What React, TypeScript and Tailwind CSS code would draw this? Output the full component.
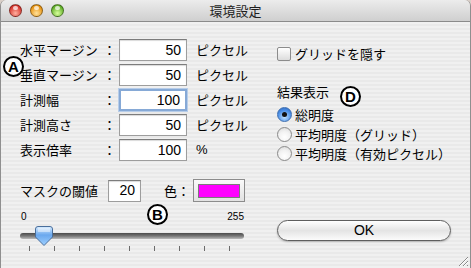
import React from "react";

const jp = "font-['Noto_Sans_CJK_JP','Noto_Sans_CJK_SC',sans-serif]";
const num = "font-['Liberation_Sans','Noto_Sans_CJK_JP',sans-serif]";

type rowData = { label: string; colonGap: boolean; value: string; unit: string; focused?: boolean };

const rows: rowData[] = [
  { label: "水平マージン", colonGap: false, value: "50", unit: "ピクセル" },
  { label: "垂直マージン", colonGap: false, value: "50", unit: "ピクセル" },
  { label: "計測幅", colonGap: true, value: "100", unit: "ピクセル", focused: true },
  { label: "計測高さ", colonGap: true, value: "50", unit: "ピクセル" },
  { label: "表示倍率", colonGap: true, value: "100", unit: "%" },
];

function Light({ color, hi }: { color: string; hi: string }) {
  return (
    <div
      className="relative h-[13px] w-[13px] rounded-full border border-black/40"
      style={{ background: `radial-gradient(circle at 50% 75%, ${hi} 0%, ${color} 70%)` }}
    >
      <div className="absolute left-[3px] top-[1px] h-[4px] w-[5px] rounded-full bg-white/70" />
    </div>
  );
}

function Marker({ letter, className }: { letter: string; className: string }) {
  return (
    <div
      className={`absolute flex h-[21px] w-[21px] items-center justify-center rounded-full border-2 border-black bg-white text-[15px] font-bold leading-none text-black ${num} ${className}`}
    >
      {letter}
    </div>
  );
}

function NumberBox({ value, focused, width }: { value: string; focused?: boolean; width: string }) {
  return (
    <div
      className={`flex h-[22px] ${width} items-center justify-end bg-white pr-[5px] text-[14px] text-black ${num} ${
        focused
          ? "border-2 border-[#86a9d6] shadow-[0_0_0_1px_#b7cde9]"
          : "border border-[#9d9d9d] border-t-[#7c7c7c] shadow-[inset_0_1px_1px_rgba(0,0,0,0.15)]"
      }`}
    >
      {value}
    </div>
  );
}

function Radio({ checked, label }: { checked?: boolean; label: string }) {
  return (
    <div className="flex h-[19.5px] items-center gap-[3px]">
      {checked ? (
        <div className="flex h-[15px] w-[15px] items-center justify-center rounded-full border border-[#3d6eb0] bg-[radial-gradient(circle_at_50%_70%,#bfe1ff_0%,#4a8ee6_60%,#2a62b8_100%)]">
          <div className="h-[5px] w-[5px] rounded-full bg-[#111]" />
        </div>
      ) : (
        <div className="h-[15px] w-[15px] rounded-full border border-[#8a8a8a] bg-[radial-gradient(circle_at_50%_70%,#ffffff_0%,#f2f2f2_50%,#d6d6d6_100%)]" />
      )}
      <span className={`text-[13px] text-black ${jp}`}>{label}</span>
    </div>
  );
}

function SliderThumb() {
  return (
    <svg width="18" height="20" viewBox="0 0 18 20" className="absolute left-[15px] top-[-7px]">
      <defs>
        <linearGradient id="thumbFill" x1="0" y1="0" x2="0" y2="1">
          <stop offset="0" stopColor="#dbeeff" />
          <stop offset="0.45" stopColor="#6aa8ee" />
          <stop offset="1" stopColor="#9fd0ff" />
        </linearGradient>
      </defs>
      <path
        d="M3 0.5 H15 Q17.5 0.5 17.5 3 V11 L9 19.5 L0.5 11 V3 Q0.5 0.5 3 0.5 Z"
        fill="url(#thumbFill)"
        stroke="#4a6f9c"
      />
      <path d="M3 2 H15 V6 H3 Z" fill="#ffffff" opacity="0.45" />
    </svg>
  );
}

function ResizeGrip() {
  return (
    <svg width="13" height="13" viewBox="0 0 13 13" className="absolute bottom-[1px] right-[1px]">
      <path d="M12 3 L3 12 M12 7 L7 12 M12 11 L11 12" stroke="#8a8a8a" strokeWidth="1" />
      <path d="M12 4 L4 12 M12 8 L8 12" stroke="#ffffff" strokeWidth="1" />
    </svg>
  );
}

export default function App() {
  const ticks = Array.from({ length: 9 });
  return (
    <div className="h-[268px] w-[471px] overflow-hidden bg-[#d9cfc8]">
      <div className="relative flex h-full w-full flex-col overflow-hidden rounded-t-[6px] border-x border-[#8f8f8f]">
        {/* title bar */}
        <div className="relative flex h-[22px] shrink-0 items-center border-b border-[#8a8a8a] bg-gradient-to-b from-[#ececec] to-[#cfcfcf]">
          <div className="ml-[8px] flex gap-[8px]">
            <Light color="#d8362e" hi="#ffb0a0" />
            <Light color="#e89412" hi="#ffe19a" />
            <Light color="#62b02a" hi="#d8ff9c" />
          </div>
          <div className={`absolute inset-x-0 text-center text-[13px] text-[#1e1e1e] ${jp}`}>環境設定</div>
        </div>

        {/* content */}
        <div className="relative flex flex-1 bg-[repeating-linear-gradient(180deg,#f0f0f0_0px,#f0f0f0_2px,#e9e9e9_2px,#e9e9e9_4px)]">
          {/* left column */}
          <div className="flex w-[260px] shrink-0 flex-col pl-[19px] pt-[17px]">
            <div className="flex flex-col gap-[3px]">
              {rows.map((r) => (
                <div key={r.label} className="flex h-[22px] items-center">
                  <span className={`w-[83px] text-[13px] text-black ${jp}`}>{r.label}</span>
                  <span className={`w-[16px] text-[13px] text-black ${jp}`}>：</span>
                  <NumberBox value={r.value} focused={r.focused} width="w-[68px]" />
                  <span className={`ml-[9px] text-[13px] text-black ${r.unit === "%" ? num : jp}`}>{r.unit}</span>
                </div>
              ))}
            </div>

            <div className="mt-[18px] flex h-[23px] items-center">
              <span className={`w-[88px] text-[13px] text-black ${jp}`}>マスクの閾値</span>
              <NumberBox value="20" width="w-[33px]" />
              <span className={`ml-[23px] w-[29px] text-[13px] text-black ${jp}`}>色：</span>
              <div className="flex h-[23px] w-[52px] items-center justify-center border border-[#8c8c8c] bg-gradient-to-b from-[#fafafa] to-[#e2e2e2]">
                <div className="h-[14px] w-[42px] border border-[#7a7a7a] bg-[#ff00ff]" />
              </div>
            </div>

            <div className={`mt-[9px] flex w-[224px] justify-between text-[10px] leading-[12px] text-black ${num}`}>
              <span className="ml-[1px]">0</span>
              <span>255</span>
            </div>

            <div className="relative mt-[10px] h-[6px] w-[224px] rounded-full bg-gradient-to-b from-[#4c4c4c] via-[#777] to-[#bdbdbd]">
              <SliderThumb />
            </div>

            <div className="mt-[7px] flex w-[210px] justify-between pl-[9px]">
              {ticks.map((_, i) => (
                <div key={i} className="h-[5px] w-px bg-[#6a6a6a]" />
              ))}
            </div>
          </div>

          {/* right column */}
          <div className="flex flex-1 flex-col pl-[16px] pr-[19px] pt-[24px] pb-[27px]">
            <div className="flex h-[16px] items-center gap-[4px]">
              <div className="h-[14px] w-[14px] rounded-[2px] border border-[#8c8c8c] bg-gradient-to-b from-[#ffffff] to-[#dcdcdc]" />
              <span className={`text-[13px] text-black ${jp}`}>グリッドを隠す</span>
            </div>

            <div className={`mt-[21px] text-[13px] leading-[18px] text-black ${jp}`}>結果表示</div>

            <div className="mt-[4px] flex flex-col">
              <Radio checked label="総明度" />
              <Radio label="平均明度（グリッド）" />
              <Radio label="平均明度（有効ピクセル）" />
            </div>

            <div
              className={`mt-auto flex h-[21px] w-full items-center justify-center rounded-full border border-[#5e5e5e] bg-gradient-to-b from-[#ffffff] via-[#e4e4e4] to-[#fbfbfb] text-[14px] text-black shadow-[0_1px_2px_rgba(0,0,0,0.25)] ${num}`}
            >
              OK
            </div>
          </div>

          <Marker letter="A" className="left-[2px] top-[34px]" />
          <Marker letter="B" className="left-[146px] top-[182px]" />
          <Marker letter="D" className="left-[339px] top-[64px]" />
          <ResizeGrip />
        </div>
      </div>
    </div>
  );
}
